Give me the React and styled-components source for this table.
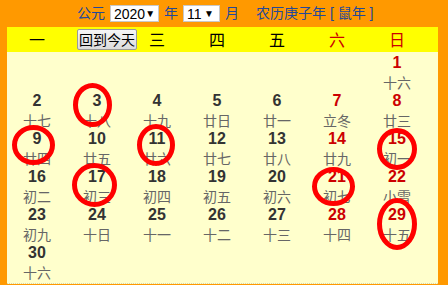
import React from "react";
import styled, { createGlobalStyle } from "styled-components";

const Global = createGlobalStyle`
  html, body { margin: 0; padding: 0; background: #ff9900; }
  body { font-family: "Liberation Sans", Arial, "Noto Sans CJK SC", sans-serif; }
`;

const Frame = styled.div`
  width: 448px;
  height: 285px;
  overflow: hidden;
  background: #ff9900;
  padding: 0 10px 0 7px;
  box-sizing: border-box;
`;

const TopBar = styled.div`
  height: 27px;
  display: flex;
  align-items: center;
  padding-left: 70px;
  font-size: 14px;
  color: #23489a;
  font-family: "Liberation Sans", "Noto Sans CJK SC", sans-serif;
`;

const Label = styled.span`
  margin-right: ${(p) => p.$gap || 5}px;
  line-height: 17px;
`;

const Select = styled.div`
  width: ${(p) => p.$w}px;
  height: 17px;
  box-sizing: border-box;
  background: #fff;
  border: 1px solid #c8c8c8;
  display: flex;
  align-items: center;
  justify-content: space-between;
  padding: 0 5px 0 3px;
  margin-right: 5px;
  color: #000;
  font-size: 14px;
  font-family: "Liberation Sans", Arial, sans-serif;
`;

const Arrow = styled.span`
  font-size: 10px;
  line-height: 1;
`;

const Table = styled.div`
  background: #ffffcc;
  height: 257px;
  border-bottom: 1px dotted #d8d8b0;
  box-sizing: border-box;
`;

const HeadRow = styled.div`
  height: 25px;
  background: #ffff00;
  display: grid;
  grid-template-columns: repeat(7, 60px);
  align-items: center;
  font-size: 16px;
  font-family: "Noto Sans CJK SC", sans-serif;
`;

const HeadCell = styled.div`
  text-align: center;
  color: ${(p) => (p.$red ? "#cc0000" : "#000")};
  line-height: 25px;
`;

const BtnCell = styled.div`
  display: flex;
  padding-left: 10px;
`;

const TodayBtn = styled.button`
  width: 60px;
  height: 21px;
  padding: 0;
  margin: 0;
  font-size: 14px;
  font-family: "Noto Sans CJK SC", sans-serif;
  color: #000;
  background: linear-gradient(#f6f6f6, #dcdcdc);
  border: 1px solid #9a9a9a;
  border-radius: 2px;
  white-space: nowrap;
  line-height: 19px;
  flex: none;
`;

const Grid = styled.div`
  display: grid;
  grid-template-columns: repeat(7, 60px);
  grid-auto-rows: 38px;
  padding-top: 1px;
`;

const Cell = styled.div`
  position: relative;
  display: flex;
  flex-direction: column;
  align-items: center;
`;

const Num = styled.div`
  font-weight: bold;
  font-size: 16px;
  line-height: 20px;
  height: 20px;
  color: ${(p) => (p.$red ? "#cc0000" : "#333333")};
  font-family: "Liberation Sans", Arial, sans-serif;
`;

const Lunar = styled.div`
  font-size: 14px;
  line-height: 18px;
  color: #666;
  font-family: "Noto Sans CJK SC", sans-serif;
`;

const Ring = styled.svg`
  position: absolute;
  left: ${(p) => p.$x}px;
  top: ${(p) => p.$y}px;
  overflow: visible;
  pointer-events: none;
`;

const RedRing = ({ x, y, w, h }) => (
  <Ring $x={x} $y={y} width={w} height={h}>
    <ellipse cx={w / 2} cy={h / 2} rx={w / 2 - 2.5} ry={h / 2 - 2.5} fill="none" stroke="#ff0000" strokeWidth="5" />
  </Ring>
);

const lunar = {
  1: "十六", 2: "十七", 3: "十八", 4: "十九", 5: "廿日", 6: "廿一", 7: "立冬",
  8: "廿三", 9: "廿四", 10: "廿五", 11: "廿六", 12: "廿七", 13: "廿八", 14: "廿九",
  15: "初一", 16: "初二", 17: "初三", 18: "初四", 19: "初五", 20: "初六", 21: "初七",
  22: "小雪", 23: "初九", 24: "十日", 25: "十一", 26: "十二", 27: "十三", 28: "十四",
  29: "十五", 30: "十六",
};

const rings = {
  3: { x: 6, y: -8, w: 39, h: 44 },
  9: { x: 5, y: -4, w: 43, h: 40 },
  11: { x: 10, y: -5, w: 38, h: 42 },
  15: { x: 10, y: -1, w: 40, h: 42 },
  17: { x: 5, y: -4, w: 45, h: 44 },
  21: { x: 5, y: 0, w: 43, h: 39 },
  29: { x: 10, y: -7, w: 40, h: 52 },
};

const days = [];
for (let i = 0; i < 6; i++) days.push(null);
for (let d = 1; d <= 30; d++) days.push(d);

export default function App() {
  return (
    <>
      <Global />
      <Frame>
        <TopBar>
          <Label>公元</Label>
          <Select $w={49}>2020<Arrow>▼</Arrow></Select>
          <Label>年</Label>
          <Select $w={37}>11<Arrow>▼</Arrow></Select>
          <Label $gap={17}>月</Label>
          <Label>农历庚子年 [ 鼠年 ]</Label>
        </TopBar>
        <Table>
          <HeadRow>
            <HeadCell>一</HeadCell>
            <BtnCell><TodayBtn>回到今天</TodayBtn></BtnCell>
            <HeadCell>三</HeadCell>
            <HeadCell>四</HeadCell>
            <HeadCell>五</HeadCell>
            <HeadCell $red>六</HeadCell>
            <HeadCell $red>日</HeadCell>
          </HeadRow>
          <Grid>
            {days.map((d, i) => {
              if (d === null) return <Cell key={"e" + i} />;
              const col = i % 7;
              const red = col >= 5;
              const r = rings[d];
              return (
                <Cell key={d}>
                  <Num $red={red}>{d}</Num>
                  <Lunar>{lunar[d]}</Lunar>
                  {r && <RedRing {...r} />}
                </Cell>
              );
            })}
          </Grid>
        </Table>
      </Frame>
    </>
  );
}
